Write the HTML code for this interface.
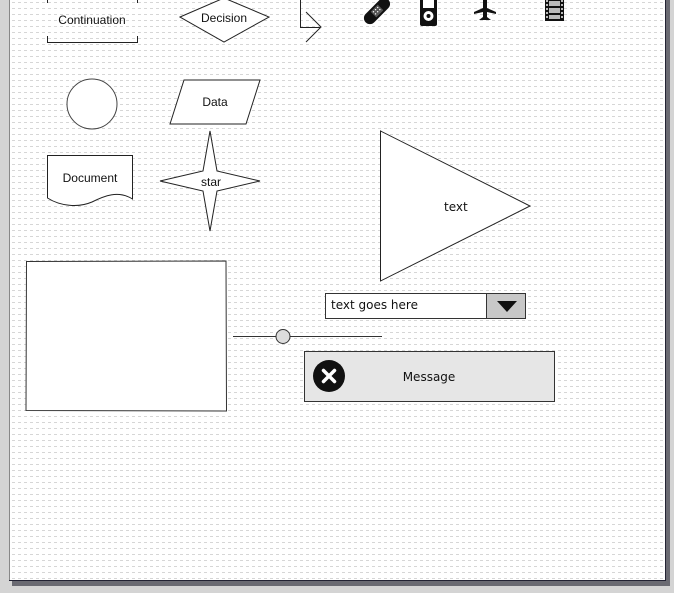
<!DOCTYPE html>
<html><head><meta charset="utf-8"><style>
html,body{margin:0;padding:0;width:674px;height:593px;overflow:hidden;background:#d4d4d4}
svg{display:block}
text{font-family:"Liberation Sans",sans-serif;fill:#111}
.h{font-family:"DejaVu Sans","Liberation Sans",sans-serif}
</style></head><body>
<svg width="674" height="593" viewBox="0 0 674 593" xmlns="http://www.w3.org/2000/svg">
<defs>
<pattern id="g" width="6" height="6" patternUnits="userSpaceOnUse">
<rect width="6" height="6" fill="#fff"/>
<rect x="0" y="2" width="3" height="1" fill="#d6d6d6"/>
</pattern>
</defs>
<rect x="0" y="0" width="674" height="593" fill="#d4d4d4"/>
<rect x="12" y="0" width="658" height="586" fill="#6a6a72"/>
<rect x="9" y="0" width="656" height="580" fill="url(#g)"/>
<line x1="9.5" y1="0" x2="9.5" y2="580" stroke="#888"/>
<line x1="9" y1="580.5" x2="666" y2="580.5" stroke="#223"/>
<line x1="665.5" y1="0" x2="665.5" y2="581" stroke="#223"/>

<g fill="none" stroke="#222" stroke-width="1">
<path d="M47.5 0V3M137.5 0V3M47.5 36V42.5H137.5V36"/>
<path d="M180 17L224 -2L269 17L224 42Z" fill="#fff"/>
<path d="M300.5 0V27.5H320M306 12L321 27L306 42"/>
<circle cx="92" cy="104" r="25" fill="#fff" stroke="#444"/>
<path d="M170 124L184 80H260L246 124Z" fill="#fff"/>
<path d="M47.5 155.5H132.5V199C118 190 104 196 92 202C78 208 60 206 47.5 198Z" fill="#fff"/>
<path d="M210 131L217 171L260 181L217 191L210 231L203 191L160 181L203 171Z" fill="#fff"/>
<path d="M380.5 131L530 206L380.5 281Z" fill="#fff"/>
<path d="M26.5 261.5L226 261L226.5 411L26 410.5Z" fill="#fff" stroke="#333"/>
<rect x="325.5" y="293.5" width="200" height="25" fill="#fff" stroke="#333"/>
<rect x="486.5" y="293.5" width="39" height="25" fill="#c8c8c8" stroke="#333"/>
<line x1="233" y1="336.5" x2="382" y2="336.5" stroke="#333"/>
<circle cx="283" cy="336.5" r="7" fill="#ddd" stroke="#333"/>
<rect x="304.5" y="351.5" width="250" height="50" fill="#e6e6e6" stroke="#333"/>
</g>
<path d="M497 301H517L507 312Z" fill="#111"/>
<circle cx="329" cy="376" r="16" fill="#111"/>
<path d="M323.5 370.5L334.5 381.5M334.5 370.5L323.5 381.5" stroke="#fff" stroke-width="3.5" stroke-linecap="round"/>

<g transform="translate(377 11) rotate(-45)"><rect x="-16" y="-6" width="32" height="12" rx="6" fill="#111"/><rect x="-5" y="-4" width="10" height="8" fill="#555"/><g fill="#fff"><circle cx="-3" cy="-2" r=".7"/><circle cx="0" cy="-2" r=".7"/><circle cx="3" cy="-2" r=".7"/><circle cx="-3" cy="1" r=".7"/><circle cx="0" cy="1" r=".7"/><circle cx="3" cy="1" r=".7"/></g></g>
<rect x="420" y="-2" width="17" height="28" rx="2" fill="#111"/>
<rect x="423" y="0" width="11" height="8" fill="#fff"/>
<circle cx="428.5" cy="16" r="5" fill="#fff"/><circle cx="428.5" cy="16" r="2" fill="#111"/>
<path d="M483 0V8L474 12V14L483 12V17L479 20H491L487 17V12L496 14V12L487 8V0Z" fill="#111"/>
<rect x="545" y="-2" width="19" height="23" fill="#111"/>
<g fill="#bbb"><rect x="549" y="1" width="11" height="5"/><rect x="549" y="8" width="11" height="5"/><rect x="549" y="15" width="11" height="4"/>
<rect x="546" y="0" width="2" height="2"/><rect x="546" y="4" width="2" height="2"/><rect x="546" y="8" width="2" height="2"/><rect x="546" y="12" width="2" height="2"/><rect x="546" y="16" width="2" height="2"/>
<rect x="561" y="0" width="2" height="2"/><rect x="561" y="4" width="2" height="2"/><rect x="561" y="8" width="2" height="2"/><rect x="561" y="12" width="2" height="2"/><rect x="561" y="16" width="2" height="2"/></g>

<g font-size="12" text-anchor="middle">
<text x="92" y="24">Continuation</text>
<text x="224" y="22">Decision</text>
<text x="215" y="106">Data</text>
<text x="90" y="182">Document</text>
<text x="211" y="186">star</text>
</g>
<g class="h" font-size="12">
<text x="444" y="211" class="h">text</text>
<text x="331" y="309" class="h">text goes here</text>
<text x="429" y="381" text-anchor="middle" class="h">Message</text>
</g>
</svg>
</body></html>
